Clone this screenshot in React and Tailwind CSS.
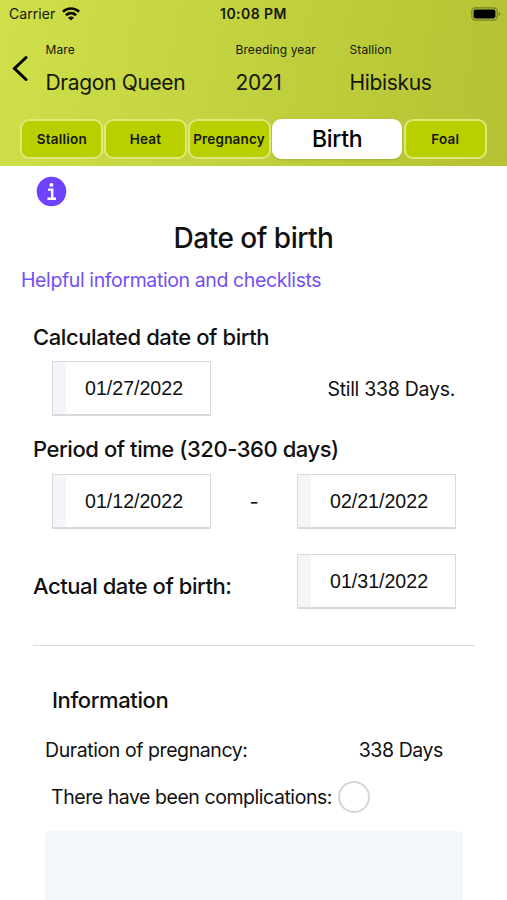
import React from "react";

const tabs = [
  { label: "Stallion", width: "w-[83px]" },
  { label: "Heat", width: "w-[83px]" },
  { label: "Pregnancy", width: "w-[83px]" },
  { label: "Birth", width: "w-[130px]", active: true },
  { label: "Foal", width: "w-[83px]" },
];

function WifiIcon() {
  return (
    <svg width="18" height="14" viewBox="0 0 18 14" fill="none" stroke="#0c0e00" strokeWidth="2.7">
      <path d="M0.9 4.8 C5.5 0.4 12.5 0.4 17.1 4.8" />
      <path d="M3.9 8.3 C6.8 5.5 11.2 5.5 14.1 8.3" />
      <path d="M9 13.6 L6 10.7 C7.8 9.2 10.2 9.2 12 10.7 Z" fill="#0c0e00" stroke="none" />
    </svg>
  );
}

function BatteryIcon() {
  return (
    <svg width="31" height="14" viewBox="0 0 31 14">
      <rect x="0.8" y="0.8" width="25.4" height="12.4" rx="3.6" fill="none" stroke="#76802a" strokeWidth="1.2" />
      <rect x="2.6" y="2.6" width="21.8" height="8.8" rx="1.8" fill="#000" />
      <path d="M27.6 4.8 C29.8 5.6 29.8 8.4 27.6 9.2 Z" fill="#76802a" />
    </svg>
  );
}

function StatusBar() {
  return (
    <div className="flex h-[27px] items-center justify-between pl-[9px] pr-[5px]">
      <div className="flex w-[148px] items-center gap-[7px]">
        <span className="text-[14px] tracking-[0.05px]">Carrier</span>
        <WifiIcon />
      </div>
      <span className="text-[14px] font-semibold tracking-[0.45px]">10:08 PM</span>
      <div className="flex w-[152px] justify-end">
        <BatteryIcon />
      </div>
    </div>
  );
}

function HeaderField({ label, value, className }) {
  return (
    <div className={className}>
      <div className="text-[12px] leading-[18px] tracking-[0.1px]">{label}</div>
      <div className="mt-2 text-[21px] leading-[32px] tracking-[-0.35px]">{value}</div>
    </div>
  );
}

function Header() {
  return (
    <header className="h-[166px] bg-linear-[100deg,#cfe04a_0%,#c3d23f_45%,#b4c233_100%] text-[#14170a]">
      <StatusBar />
      <div className="flex h-[92px] pt-[14px]">
        <button className="flex w-[45.5px] items-start pl-[12px] pt-[14px]">
          <svg width="17" height="27" viewBox="0 0 17 27" fill="none" stroke="#000" strokeWidth="3" strokeLinecap="round">
            <path d="M14 2.5 L2.5 13.5 L14 24.5" />
          </svg>
        </button>
        <HeaderField className="w-[190px]" label="Mare" value="Dragon Queen" />
        <HeaderField className="w-[114px]" label="Breeding year" value="2021" />
        <HeaderField label="Stallion" value="Hibiskus" />
      </div>
      <nav className="flex gap-[0.6px] pl-[20.4px]">
        {tabs.map((tab) => (
          <button
            key={tab.label}
            className={
              tab.active
                ? `${tab.width} mx-[1px] h-10 rounded-[9px] bg-white text-[23px] font-medium tracking-[-0.3px] text-black shadow-sm`
                : `${tab.width} h-10 rounded-[9px] border-2 border-[#dcea7c] bg-[#b9d000] text-[13.5px] font-semibold tracking-[0.2px]`
            }
          >
            {tab.label}
          </button>
        ))}
      </nav>
    </header>
  );
}

function DateField({ value }) {
  return (
    <div className="flex h-[55px] w-[159px] border border-b-2 border-[#d9dadd] bg-white">
      <div className="w-[13px] bg-[#f3f5f8]" />
      <div className="flex-1 pl-[19px] pt-[10.5px] font-['Liberation_Sans',sans-serif] text-[19.6px] leading-[30px]">
        {value}
      </div>
    </div>
  );
}

export default function App() {
  return (
    <div className="h-[900px] w-[507px] overflow-hidden bg-white font-['Inter',sans-serif] text-[#111]">
      <Header />
      <main>
        <svg className="ml-9 mt-[10px] block" width="31" height="31" viewBox="0 0 31 31">
          <circle cx="15.5" cy="15.5" r="14.8" fill="#6f42ff" />
          <circle cx="15.4" cy="9" r="2" fill="#fff" />
          <path d="M12 13.6 H16.2 V22.4 M11.4 22.7 H20" fill="none" stroke="#fff" strokeWidth="2.4" />
        </svg>
        <h1 className="mt-[11px] text-center text-[28px] font-medium leading-10 tracking-[-0.5px]">Date of birth</h1>
        <a className="mt-[7px] block pl-[21px] text-[19.5px] leading-[30px] tracking-[-0.39px] text-[#7350f2]">
          Helpful information and checklists
        </a>

        <section className="pl-[33px] pr-[32px]">
          <h2 className="mt-[27px] text-[22px] font-medium leading-[30px] tracking-[-0.42px]">Calculated date of birth</h2>
          <div className="mt-[9px] flex items-center justify-between pl-[19px] pr-[20px]">
            <DateField value="01/27/2022" />
            <span className="pt-[3px] text-[19.5px] tracking-[-0.28px]">Still 338 Days.</span>
          </div>
          <h2 className="mt-[18px] text-[22px] font-medium leading-[30px] tracking-[-0.44px]">Period of time (320-360 days)</h2>
          <div className="mt-[10px] flex items-center justify-between pl-[19px] pr-[19px]">
            <DateField value="01/12/2022" />
            <span className="text-[20px]">-</span>
            <DateField value="02/21/2022" />
          </div>
          <div className="mt-[25px] flex justify-between pr-[19px]">
            <h2 className="pt-[17px] text-[22px] font-medium leading-[30px] tracking-[-0.44px]">Actual date of birth:</h2>
            <DateField value="01/31/2022" />
          </div>
          <hr className="mt-[36px] border-[#dcdde0]" />
        </section>

        <section className="px-[45px]">
          <h2 className="mt-[39px] pl-[7px] text-[22px] font-medium leading-[30px] tracking-[-0.4px]">Information</h2>
          <div className="mt-5 flex justify-between pr-[19px] text-[19.5px] leading-[30px] tracking-[-0.42px]">
            <span>Duration of pregnancy:</span>
            <span>338 Days</span>
          </div>
          <label className="mt-4 flex h-8 items-center gap-[6px] pl-[6px] text-[19.5px] tracking-[-0.45px]">
            <span className="pt-px">There have been complications:</span>
            <span className="h-8 w-8 rounded-full border-2 border-[#d6d6d6]" />
          </label>
          <div className="mt-[18px] h-[100px] w-[418px] rounded-[5px] bg-[#f3f6fa]" />
        </section>
      </main>
    </div>
  );
}
